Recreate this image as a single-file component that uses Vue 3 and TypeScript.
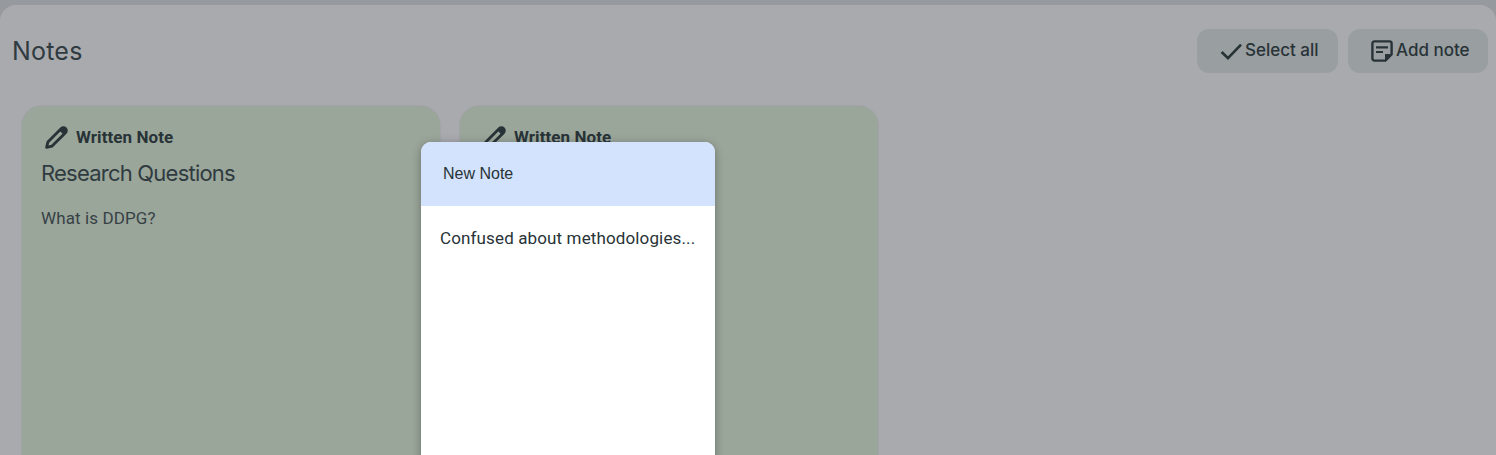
<script setup lang="ts">
interface Note { id: number; title: string; body: string }
const notes: Note[] = [
  { id: 1, title: 'Research Questions', body: 'What is DDPG?' },
  { id: 2, title: '', body: '' },
]
</script>

<template>
  <div class="page">
    <main class="panel">
      <header class="head">
        <h1 class="title">Notes</h1>
        <div class="actions">
          <button class="btn btn-select" type="button">
            <svg class="ico" viewBox="0 0 24 24" width="24" height="24"><path d="M2.6 13 9 19.2 22 5.6" fill="none" stroke="#283337" stroke-width="2.7"/></svg>
            <span class="label">Select all</span>
          </button>
          <button class="btn btn-add" type="button">
            <svg class="ico" viewBox="0 0 24 24" width="24" height="24"><path d="M2.4 4.4a2 2 0 0 1 2-2h15.2a2 2 0 0 1 2 2v11l-6.2 6.2H4.4a2 2 0 0 1-2-2z" fill="none" stroke="#283337" stroke-width="2.4" stroke-linejoin="round"/><path d="M6 8.4h12M6 13h7" stroke="#283337" stroke-width="2.2" fill="none"/><path d="M15 22V15h7z" fill="#283337"/></svg>
            <span class="label">Add note</span>
          </button>
        </div>
      </header>
      <section class="cards">
        <article v-for="n in notes" :key="n.id" class="card">
          <div class="kind">
            <svg class="pencil" viewBox="0 0 24 24" width="24" height="24"><path d="M2.6 21.4 3.9 15.9 17.3 2.5A2.75 2.75 0 0 1 21.5 6.7L8.1 20.1Z" fill="none" stroke="#283337" stroke-width="2.8" stroke-linejoin="round"/><path d="M15.4 4.6 19.4 8.6 21.5 6.7A2.75 2.75 0 0 0 17.3 2.5Z" fill="#283337"/></svg>
            <span class="kind-label">Written Note</span>
          </div>
          <h2 v-if="n.title" class="card-title">{{ n.title }}</h2>
          <p v-if="n.body" class="card-body">{{ n.body }}</p>
        </article>
      </section>
    </main>
    <aside class="popup">
      <div class="popup-head">New Note</div>
      <p class="popup-body">Confused about methodologies...</p>
    </aside>
  </div>
</template>

<style>
html, body { margin: 0; overflow: hidden; background: #96999d; }
</style>

<style scoped>
.page {
  position: relative;
  height: 455px;
  overflow: hidden;
  padding-top: 5px;
  box-sizing: border-box;
  background: #96999d;
  font-family: Roboto, "Liberation Sans", sans-serif;
  color: #283337;
}
.panel {
  height: 450px;
  background: #a9aaae;
  border-radius: 16px 16px 0 0;
  padding: 0 8px 0 12px;
  box-sizing: border-box;
  overflow: hidden;
}
.head {
  display: flex;
  justify-content: space-between;
  align-items: center;
  height: 44px;
  padding-top: 24px;
}
.title {
  margin: 0;
  font: 400 25px/32px Inter, Roboto, sans-serif;
  letter-spacing: .2px;
  color: #2f3b40;
}
.actions { display: flex; gap: 10px; }
.btn {
  display: flex;
  align-items: center;
  height: 44px;
  border: 0;
  border-radius: 12px;
  background: #999ea1;
  color: #283337;
  font: 500 17px/18px Inter, Roboto, sans-serif;
  box-sizing: border-box;
}
.btn-select { width: 141px; padding: 0 0 0 22px; }
.btn-add { width: 140px; padding: 0 0 0 22px; }
.ico { flex: none; margin-right: 2px; }
.label { margin-bottom: 2px; }
.cards {
  display: flex;
  gap: 20px;
  margin-top: 33px;
  padding-left: 10px;
}
.card {
  width: 418px;
  height: 400px;
  background: #9ba69a;
  border-radius: 20px;
  box-shadow: 0 0 2px #8f9797;
  padding: 20px 0 0 19px;
  box-sizing: border-box;
}
.kind {
  display: flex;
  align-items: center;
  gap: 8px;
  height: 24px;
  padding-left: 3px;
  font: 700 17px/24px Roboto, sans-serif;
  letter-spacing: .08px;
  color: #283337;
}
.kind-label { margin-bottom: 2px; }
.pencil { flex: none; }
.card-title {
  margin: 9px 0 0;
  font: 400 22px/28px Inter, Roboto, sans-serif;
  letter-spacing: -.78px;
  color: #2f3b40;
}
.card-body {
  margin: 19px 0 0;
  font: 400 17px/24px Roboto, sans-serif;
  letter-spacing: .1px;
  color: #364146;
}
.popup {
  position: absolute;
  left: 421px;
  top: 142px;
  width: 294px;
  height: 330px;
  background: #fff;
  border-radius: 10px;
  box-shadow: 0 2px 8px rgba(40, 45, 50, .45);
}
.popup-head {
  height: 64px;
  padding-left: 22px;
  background: #d3e3fd;
  border-radius: 10px 10px 0 0;
  font: 400 16px/63px "Liberation Sans", sans-serif;
  color: #283337;
}
.popup-body {
  margin: 20px 0 0 19px;
  font: 400 17px/24px Roboto, sans-serif;
  letter-spacing: .13px;
  color: #283337;
  white-space: nowrap;
}
</style>
